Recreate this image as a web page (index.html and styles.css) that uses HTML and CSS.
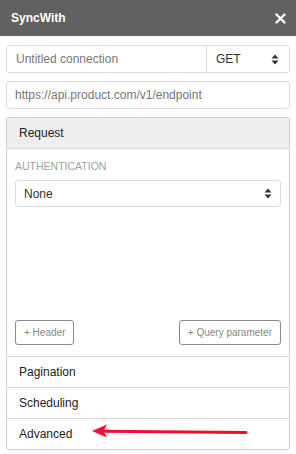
FILE: index.html
```html
<!DOCTYPE html>
<html lang="en">
<head>
    <meta charset="UTF-8">
    <title>SyncWith</title>
    <link rel="stylesheet" href="styles.css">
</head>
<body>
    <div class="topbar">
        <span class="title">SyncWith</span>
        <svg class="close" width="11" height="11" viewBox="0 0 11 11">
            <path d="M1.5 1.5 L9.5 9.5 M9.5 1.5 L1.5 9.5" stroke="#fff" stroke-width="2.4" stroke-linecap="round"/>
        </svg>
    </div>

    <div class="content">
        <div class="field-row">
            <input type="text" class="name-input" placeholder="Untitled connection">
            <div class="method">
                <span>GET</span>
                <svg class="updown" width="8" height="11" viewBox="0 0 8 11">
                    <path d="M4 0.5 L7.5 4.5 L0.5 4.5 Z M4 10.5 L7.5 6.5 L0.5 6.5 Z" fill="#333"/>
                </svg>
            </div>
        </div>

        <input type="text" class="url-input" placeholder="https://api.product.com/v1/endpoint">

        <div class="panel">
            <div class="panel-head">Request</div>
            <div class="panel-body">
                <div class="label">AUTHENTICATION</div>
                <div class="select">
                    <span>None</span>
                    <svg class="updown" width="8" height="11" viewBox="0 0 8 11">
                        <path d="M4 0.5 L7.5 4.5 L0.5 4.5 Z M4 10.5 L7.5 6.5 L0.5 6.5 Z" fill="#333"/>
                    </svg>
                </div>
                <div class="actions">
                    <button class="btn">+ Header</button>
                    <button class="btn">+ Query parameter</button>
                </div>
            </div>
            <div class="section">Pagination</div>
            <div class="section">Scheduling</div>
            <div class="section">Advanced</div>
        </div>
    </div>

    <svg class="pointer" width="170" height="20" viewBox="0 0 170 20">
        <path d="M14 9.2 L156 10.4" stroke="#f0102e" stroke-width="3" stroke-linecap="round"/>
        <path d="M2 9 L17 2.5 L13.5 9.2 L17 15.5 Z" fill="#f0102e"/>
    </svg>
</body>
</html>
```

FILE: styles.css
```css
* {
    margin: 0;
    padding: 0;
    box-sizing: border-box;
}

body {
    font-family: 'Liberation Sans', Arial, sans-serif;
    font-size: 12px;
    color: #222;
    background: #fff;
    position: relative;
    width: 296px;
    height: 454px;
    overflow: hidden;
}

.topbar {
    height: 36px;
    background: #616161;
    display: flex;
    align-items: center;
    justify-content: space-between;
    padding: 0 10px 0 11px;
}

.title {
    color: #fff;
    font-weight: 700;
    font-size: 12px;
}

.close {
    display: block;
}

.content {
    padding: 9px 6px 0;
}

.field-row {
    display: flex;
    height: 28px;
    border: 1px solid #ddd;
    border-radius: 3px;
}

input {
    font-family: inherit;
    font-size: 12px;
    color: #222;
    outline: none;
}

input::placeholder {
    color: #777;
}

.name-input {
    flex: 1;
    min-width: 0;
    border: none;
    background: transparent;
    padding: 0 9px;
}

.method {
    width: 83px;
    border-left: 1px solid #ddd;
    display: flex;
    align-items: center;
    justify-content: space-between;
    padding: 0 10px 0 9px;
    color: #333;
}

.updown {
    display: block;
}

.url-input {
    display: block;
    width: 100%;
    height: 28px;
    margin-top: 8px;
    border: 1px solid #ddd;
    border-radius: 3px;
    padding: 0 8px;
}

.panel {
    margin-top: 8px;
    border: 1px solid #d0d0d0;
    border-radius: 3px;
    overflow: hidden;
}

.panel-head {
    height: 31px;
    line-height: 30px;
    background: #eee;
    border-bottom: 1px solid #d8d8d8;
    padding: 0 12px;
}

.panel-body {
    height: 207px;
    display: flex;
    flex-direction: column;
    padding: 10px 8px 11px;
}

.label {
    font-size: 10.5px;
    line-height: 14px;
    color: #a0a0a0;
    margin-bottom: 7px;
}

.select {
    height: 27px;
    border: 1px solid #ddd;
    border-radius: 3px;
    display: flex;
    align-items: center;
    justify-content: space-between;
    padding: 0 8px 0 8px;
    color: #333;
}

.actions {
    margin-top: auto;
    display: flex;
    justify-content: space-between;
}

.btn {
    height: 25px;
    padding: 0 8px;
    font-family: inherit;
    font-size: 10px;
    color: #888;
    background: #fff;
    border: 1px solid #8a8a8a;
    border-radius: 3px;
}

.section {
    height: 31px;
    line-height: 30px;
    border-top: 1px solid #d8d8d8;
    padding: 0 12px;
}

.pointer {
    position: absolute;
    left: 90px;
    top: 422px;
}
```
